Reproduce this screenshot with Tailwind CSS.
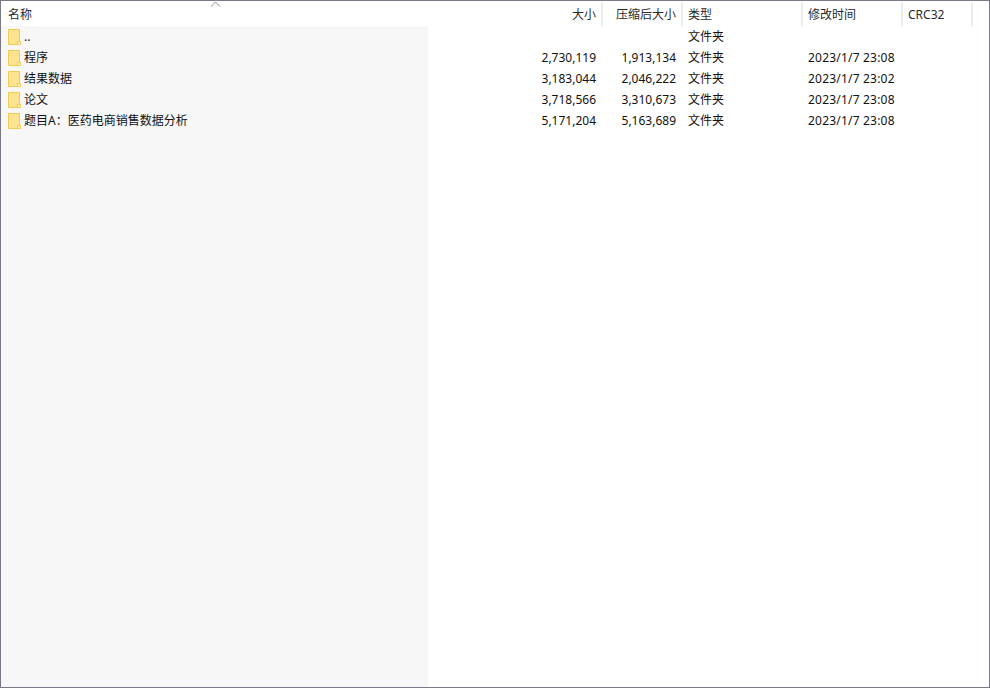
<!DOCTYPE html>
<html lang="zh-CN">

<head>
    <meta charset="UTF-8">
    <title>压缩文件列表</title>
    <script src="https://cdn.jsdelivr.net/npm/@tailwindcss/browser@4"></script>
</head>

<body class="bg-white overflow-hidden">
    <div class="relative h-[688px] w-[990px] border border-[#7a7a87] bg-white text-[12px] leading-[21px] text-[#111] font-['Noto_Sans','Noto_Sans_CJK_SC',sans-serif]">
        <!-- Sort arrow -->
        <svg class="absolute left-[209px] top-0" width="11" height="6" viewBox="0 0 11 6" fill="none" stroke="#8a8a8a">
            <path d="M1 5.5 L5.5 1 L10 5.5" />
        </svg>

        <!-- Header -->
        <div class="flex h-[25px] items-start text-[#2a2a2a]">
            <div class="mt-px flex h-[24px] w-[427px] items-center pl-[7px]">名称</div>
            <div class="mt-px flex h-[24px] w-[175px] items-center justify-end border-r-2 border-[#ececec] pr-[5px]">大小</div>
            <div class="mt-px flex h-[24px] w-[80px] items-center justify-end border-r-2 border-[#ececec] pr-[5px]">压缩后大小</div>
            <div class="mt-px flex h-[24px] w-[120px] items-center border-r-2 border-[#ececec] pl-[5px]">类型</div>
            <div class="mt-px flex h-[24px] w-[100px] items-center border-r-2 border-[#ececec] pl-[5px]">修改时间</div>
            <div class="mt-px flex h-[24px] w-[70px] items-center border-r-2 border-[#ececec] pl-[5px]">CRC32</div>
        </div>

        <!-- Rows -->
        <div class="flex h-[661px]">
            <div class="w-[427px] bg-[#f7f7f7]">
                <div class="flex h-[21px] items-center gap-[2px] pl-[7px]">
                    <svg width="14" height="16" viewBox="0 0 14 16"><path d="M0.5 0.5H11.5V12L9.5 15.5H0.5Z" fill="#ffe48f" stroke="#f2c94f" /><path d="M9.5 15.5V12.5H12.5V15.5Z" fill="#fff3c9" stroke="#f2c94f" /></svg>
                    <span>..</span>
                </div>
                <div class="flex h-[21px] items-center gap-[2px] pl-[7px]">
                    <svg width="14" height="16" viewBox="0 0 14 16"><path d="M0.5 0.5H11.5V12L9.5 15.5H0.5Z" fill="#ffe48f" stroke="#f2c94f" /><path d="M9.5 15.5V12.5H12.5V15.5Z" fill="#fff3c9" stroke="#f2c94f" /></svg>
                    <span>程序</span>
                </div>
                <div class="flex h-[21px] items-center gap-[2px] pl-[7px]">
                    <svg width="14" height="16" viewBox="0 0 14 16"><path d="M0.5 0.5H11.5V12L9.5 15.5H0.5Z" fill="#ffe48f" stroke="#f2c94f" /><path d="M9.5 15.5V12.5H12.5V15.5Z" fill="#fff3c9" stroke="#f2c94f" /></svg>
                    <span>结果数据</span>
                </div>
                <div class="flex h-[21px] items-center gap-[2px] pl-[7px]">
                    <svg width="14" height="16" viewBox="0 0 14 16"><path d="M0.5 0.5H11.5V12L9.5 15.5H0.5Z" fill="#ffe48f" stroke="#f2c94f" /><path d="M9.5 15.5V12.5H12.5V15.5Z" fill="#fff3c9" stroke="#f2c94f" /></svg>
                    <span>论文</span>
                </div>
                <div class="flex h-[21px] items-center gap-[2px] pl-[7px]">
                    <svg width="14" height="16" viewBox="0 0 14 16"><path d="M0.5 0.5H11.5V12L9.5 15.5H0.5Z" fill="#ffe48f" stroke="#f2c94f" /><path d="M9.5 15.5V12.5H12.5V15.5Z" fill="#fff3c9" stroke="#f2c94f" /></svg>
                    <span>题目A：医药电商销售数据分析</span>
                </div>
            </div>
            <div>
                <div class="flex h-[21px]"><div class="w-[168px] text-right"></div><div class="w-[80px] text-right"></div><div class="ml-[12px] w-[120px]">文件夹</div><div></div></div>
                <div class="flex h-[21px]"><div class="w-[168px] text-right">2,730,119</div><div class="w-[80px] text-right">1,913,134</div><div class="ml-[12px] w-[120px]">文件夹</div><div class="tracking-[0.2px]">2023/1/7 23:08</div></div>
                <div class="flex h-[21px]"><div class="w-[168px] text-right">3,183,044</div><div class="w-[80px] text-right">2,046,222</div><div class="ml-[12px] w-[120px]">文件夹</div><div class="tracking-[0.2px]">2023/1/7 23:02</div></div>
                <div class="flex h-[21px]"><div class="w-[168px] text-right">3,718,566</div><div class="w-[80px] text-right">3,310,673</div><div class="ml-[12px] w-[120px]">文件夹</div><div class="tracking-[0.2px]">2023/1/7 23:08</div></div>
                <div class="flex h-[21px]"><div class="w-[168px] text-right">5,171,204</div><div class="w-[80px] text-right">5,163,689</div><div class="ml-[12px] w-[120px]">文件夹</div><div class="tracking-[0.2px]">2023/1/7 23:08</div></div>
            </div>
        </div>
    </div>
</body>

</html>
